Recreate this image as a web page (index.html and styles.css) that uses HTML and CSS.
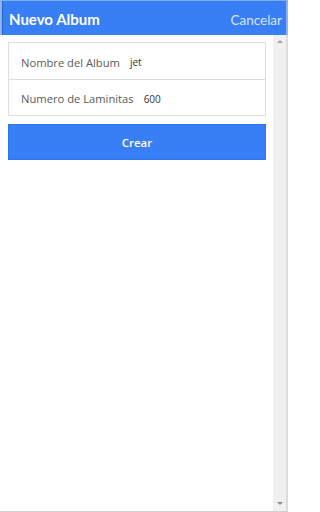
FILE: index.html
```html
<!DOCTYPE html>
<html lang="es">
<head>
<meta charset="utf-8">
<title>Nuevo Album</title>
<link rel="stylesheet" href="styles.css">
</head>
<body>
<div class="app">
  <header class="toolbar">
    <h1 class="title">Nuevo Album</h1>
    <button class="cancel">Cancelar</button>
  </header>
  <div class="body">
    <main class="content">
      <div class="list">
        <div class="item">
          <span class="label">Nombre del Album</span>
          <span class="value">jet</span>
        </div>
        <div class="item">
          <span class="label">Numero de Laminitas</span>
          <span class="value">600</span>
        </div>
      </div>
      <button class="create">Crear</button>
    </main>
    <div class="scrollbar">
      <span class="arrow up"></span>
      <span class="arrow down"></span>
    </div>
  </div>
</div>
</body>
</html>
```

FILE: styles.css
```css
html, body {
  margin: 0;
  padding: 0;
  background: #fff;
  font-family: "Open Sans", "Noto Sans", sans-serif;
}
.app {
  width: 288px;
  height: 512px;
  box-sizing: border-box;
  border-bottom: 1px solid #cfcfcf;
  display: flex;
  flex-direction: column;
  overflow: hidden;
}
.toolbar {
  flex: 0 0 35px;
  box-sizing: border-box;
  display: flex;
  align-items: center;
  justify-content: space-between;
  background: #387ef5;
  border-top: 1px solid #7eaaf7;
  border-left: 2px solid #8bb3f8;
  border-right: 2px solid #8bb3f8;
  padding: 1px 4px 0 7px;
  box-shadow: inset 1px 0 0 #2a62c4;
}
.title {
  margin: 0;
  font-family: Lato, "Open Sans", sans-serif;
  font-size: 15px;
  font-weight: 700;
  color: #fff;
}
.cancel {
  border: 0;
  background: none;
  padding: 2px 0 0;
  font-family: Lato, "Open Sans", sans-serif;
  font-size: 13.5px;
  color: rgba(255,255,255,0.82);
}
.body {
  flex: 1;
  display: flex;
  min-height: 0;
}
.content {
  flex: 1;
  padding: 7px 7px 0 8px;
}
.list {
  border: 1px solid #dedede;
  background: #fff;
}
.item {
  height: 36px;
  display: flex;
  align-items: center;
  padding: 2px 0 0 12px;
  box-sizing: border-box;
  gap: 10px;
}
.item + .item {
  border-top: 1px solid #dedede;
}
.label {
  font-size: 11.2px;
  color: #5a5a5a;
}
.value {
  font-size: 10px;
  color: #333;
}
.create {
  display: block;
  width: 100%;
  height: 36px;
  margin-top: 8px;
  padding-top: 1px;
  border: 1px solid #2c74f0;
  background: #387ef5;
  color: #fff;
  font: inherit;
  font-size: 11.5px;
  font-weight: 600;
}
.scrollbar {
  flex: 0 0 13px;
  background: #f0f0f0;
  border-right: 2px solid #dcdcdc;
  display: flex;
  flex-direction: column;
  justify-content: space-between;
  align-items: center;
  padding: 5px 0 6px;
}
.arrow {
  width: 0;
  height: 0;
  border-left: 3px solid transparent;
  border-right: 3px solid transparent;
}
.arrow.up {
  border-bottom: 3px solid #a3a3a3;
}
.arrow.down {
  border-top: 3px solid #8a8a8a;
}
```
